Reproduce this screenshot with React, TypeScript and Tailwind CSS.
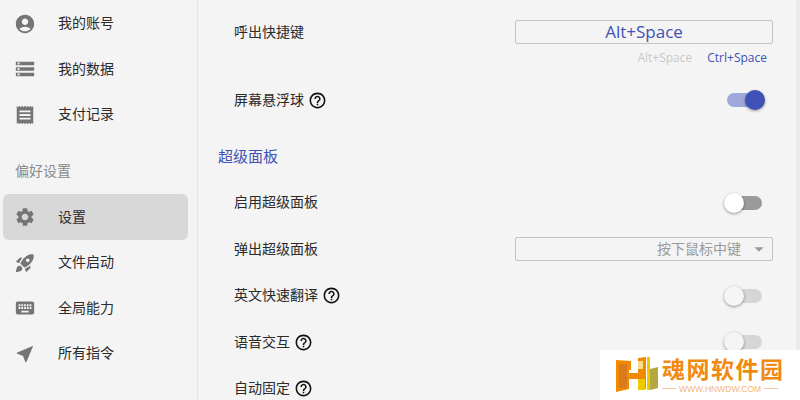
import type { ReactNode } from 'react';
import {
  MdAccountCircle,
  MdStorage,
  MdReceipt,
  MdSettings,
  MdRocketLaunch,
  MdKeyboard,
  MdNearMe,
  MdHelpOutline,
  MdArrowDropDown,
} from 'react-icons/md';

const font = "font-['Liberation_Sans','Noto_Sans_CJK_SC',sans-serif]";

function NavItem({ icon, label, active }: { icon: ReactNode; label: string; active?: boolean }) {
  return (
    <div
      className={`ml-[3px] mr-[9px] flex h-[45.6px] items-center rounded-[6px] pl-[11px] text-[14px] text-[#2b2b2b] ${
        active ? 'bg-[#d8d8d8]' : ''
      }`}
    >
      <span className="flex w-[44px] text-[22px] text-[#757575]">{icon}</span>
      <span>{label}</span>
    </div>
  );
}

function Help() {
  return <MdHelpOutline className="ml-[4px] text-[19px] text-[#111]" />;
}

function Toggle({ on, muted }: { on?: boolean; muted?: boolean }) {
  const track = on ? 'bg-[#9fa8da]' : muted ? 'bg-[#d6d6d6]' : 'bg-[#9b9b9b]';
  const thumb = on ? 'bg-[#3f51b5]' : muted ? 'bg-[#f5f5f5]' : 'bg-white';
  return (
    <div className={`relative mr-[11px] h-[14px] w-[35px] rounded-full ${track}`}>
      <span
        className={`absolute top-[-3px] size-[20px] rounded-full shadow-[0_1px_3px_rgba(0,0,0,0.4)] ${thumb} ${
          on ? 'right-[-3px]' : 'left-[-3px]'
        }`}
      />
    </div>
  );
}

function Row({ label, help, children }: { label: string; help?: boolean; children?: ReactNode }) {
  return (
    <div className="flex h-[46.5px] items-center justify-between pl-[36px] pr-[23px] text-[14px] text-[#2b2b2b]">
      <span className="flex items-center">
        {label}
        {help && <Help />}
      </span>
      {children}
    </div>
  );
}

export default function App() {
  return (
    <div className={`flex h-[400px] w-[800px] overflow-hidden bg-[#f4f4f4] ${font}`}>
      <aside className="h-full w-[198px] shrink-0 border-r border-[#e4e4e4] pt-[1px]">
        <NavItem icon={<MdAccountCircle />} label="我的账号" />
        <NavItem icon={<MdStorage />} label="我的数据" />
        <NavItem icon={<MdReceipt />} label="支付记录" />
        <div className="flex h-[56.5px] items-end pb-[11px] pl-[15px] text-[14px] leading-[24px] text-[#8a8a8a]">
          偏好设置
        </div>
        <NavItem icon={<MdSettings />} label="设置" active />
        <NavItem icon={<MdRocketLaunch />} label="文件启动" />
        <NavItem icon={<MdKeyboard />} label="全局能力" />
        <NavItem icon={<MdNearMe />} label="所有指令" />
      </aside>

      <main className="relative min-w-0 flex-1">
        <div className="pr-[4px]">
          <div className="flex items-start justify-between pl-[36px] pr-[23px] pt-[20px] text-[14px] text-[#2b2b2b]">
            <span className="leading-[24px]">呼出快捷键</span>
            <div className="w-[258px] font-['Open_Sans','Noto_Sans_CJK_SC',sans-serif]">
              <div className="flex h-[24px] items-center justify-center rounded-[2px] border border-[#c4c4c4] text-[17px] text-[#3f51b5]">
                Alt+Space
              </div>
              <div className="mt-[6px] flex justify-end gap-[15px] pr-[6px] text-[12px] leading-[16px]">
                <span className="text-[#c8c8c8]">Alt+Space</span>
                <span className="text-[#3f51b5]">Ctrl+Space</span>
              </div>
            </div>
          </div>

          <div className="mt-[11px]">
            <Row label="屏幕悬浮球" help>
              <Toggle on />
            </Row>
          </div>

          <div className="mt-[11px] flex h-[45px] items-center pl-[20px] text-[15px] text-[#3f51b5]">
            超级面板
          </div>

          <Row label="启用超级面板">
            <Toggle />
          </Row>
          <Row label="弹出超级面板">
            <div className="flex h-[24px] w-[258px] items-center justify-end rounded-[2px] border border-[#c4c4c4] pr-[2px] text-[14px] text-[#9a9a9a]">
              按下鼠标中键
              <MdArrowDropDown className="ml-[7px] text-[22px] text-[#9a9a9a]" />
            </div>
          </Row>
          <Row label="英文快速翻译" help>
            <Toggle muted />
          </Row>
          <Row label="语音交互" help>
            <Toggle muted />
          </Row>
          <Row label="自动固定" help />
        </div>

        {/* scrollbar */}
        <div className="absolute right-0 top-0 h-full w-[4px] bg-[#ebebeb]" />

        {/* watermark */}
        <div className="absolute bottom-0 right-0 flex h-[50px] w-[200px] items-center bg-white pl-[16px]">
          <svg width="42" height="36" viewBox="0 0 42 36" className="shrink-0">
            <path d="M0 3l15 1v9h7V1l8-1v32l-11 0v-10h-6v10L0 35z" fill="#f08a00" />
            <path d="M3 7h8v24H3z" fill="#d97a20" />
            <path d="M13 13h9v3h-9zM15 22h7v10h-7z" fill="#fff" />
            <path d="M22 4h5v8h-5z" fill="#f8dc8a" />
            <path d="M22 22h7v11h-7z" fill="#edc900" />
            <path d="M31 0l3-1v34h-3z" fill="#edc900" />
            <path d="M34 12l8-2v21l-8 2z" fill="#b5a642" />
          </svg>
          <div className="ml-[4px] flex flex-col">
            <span className="text-[23px] font-bold leading-[26px] tracking-[1.5px] text-[#f08a10]">魂网软件园</span>
            <span className="mt-[1px] flex items-center text-[8.5px] leading-[10px] text-[#f3b878]">
              <span className="mr-[3px] h-px w-[14px] bg-[#f3c79a]" />
              WWW.HNWDW.COM
              <span className="ml-[3px] h-px w-[14px] bg-[#f3c79a]" />
            </span>
          </div>
        </div>
      </main>
    </div>
  );
}
